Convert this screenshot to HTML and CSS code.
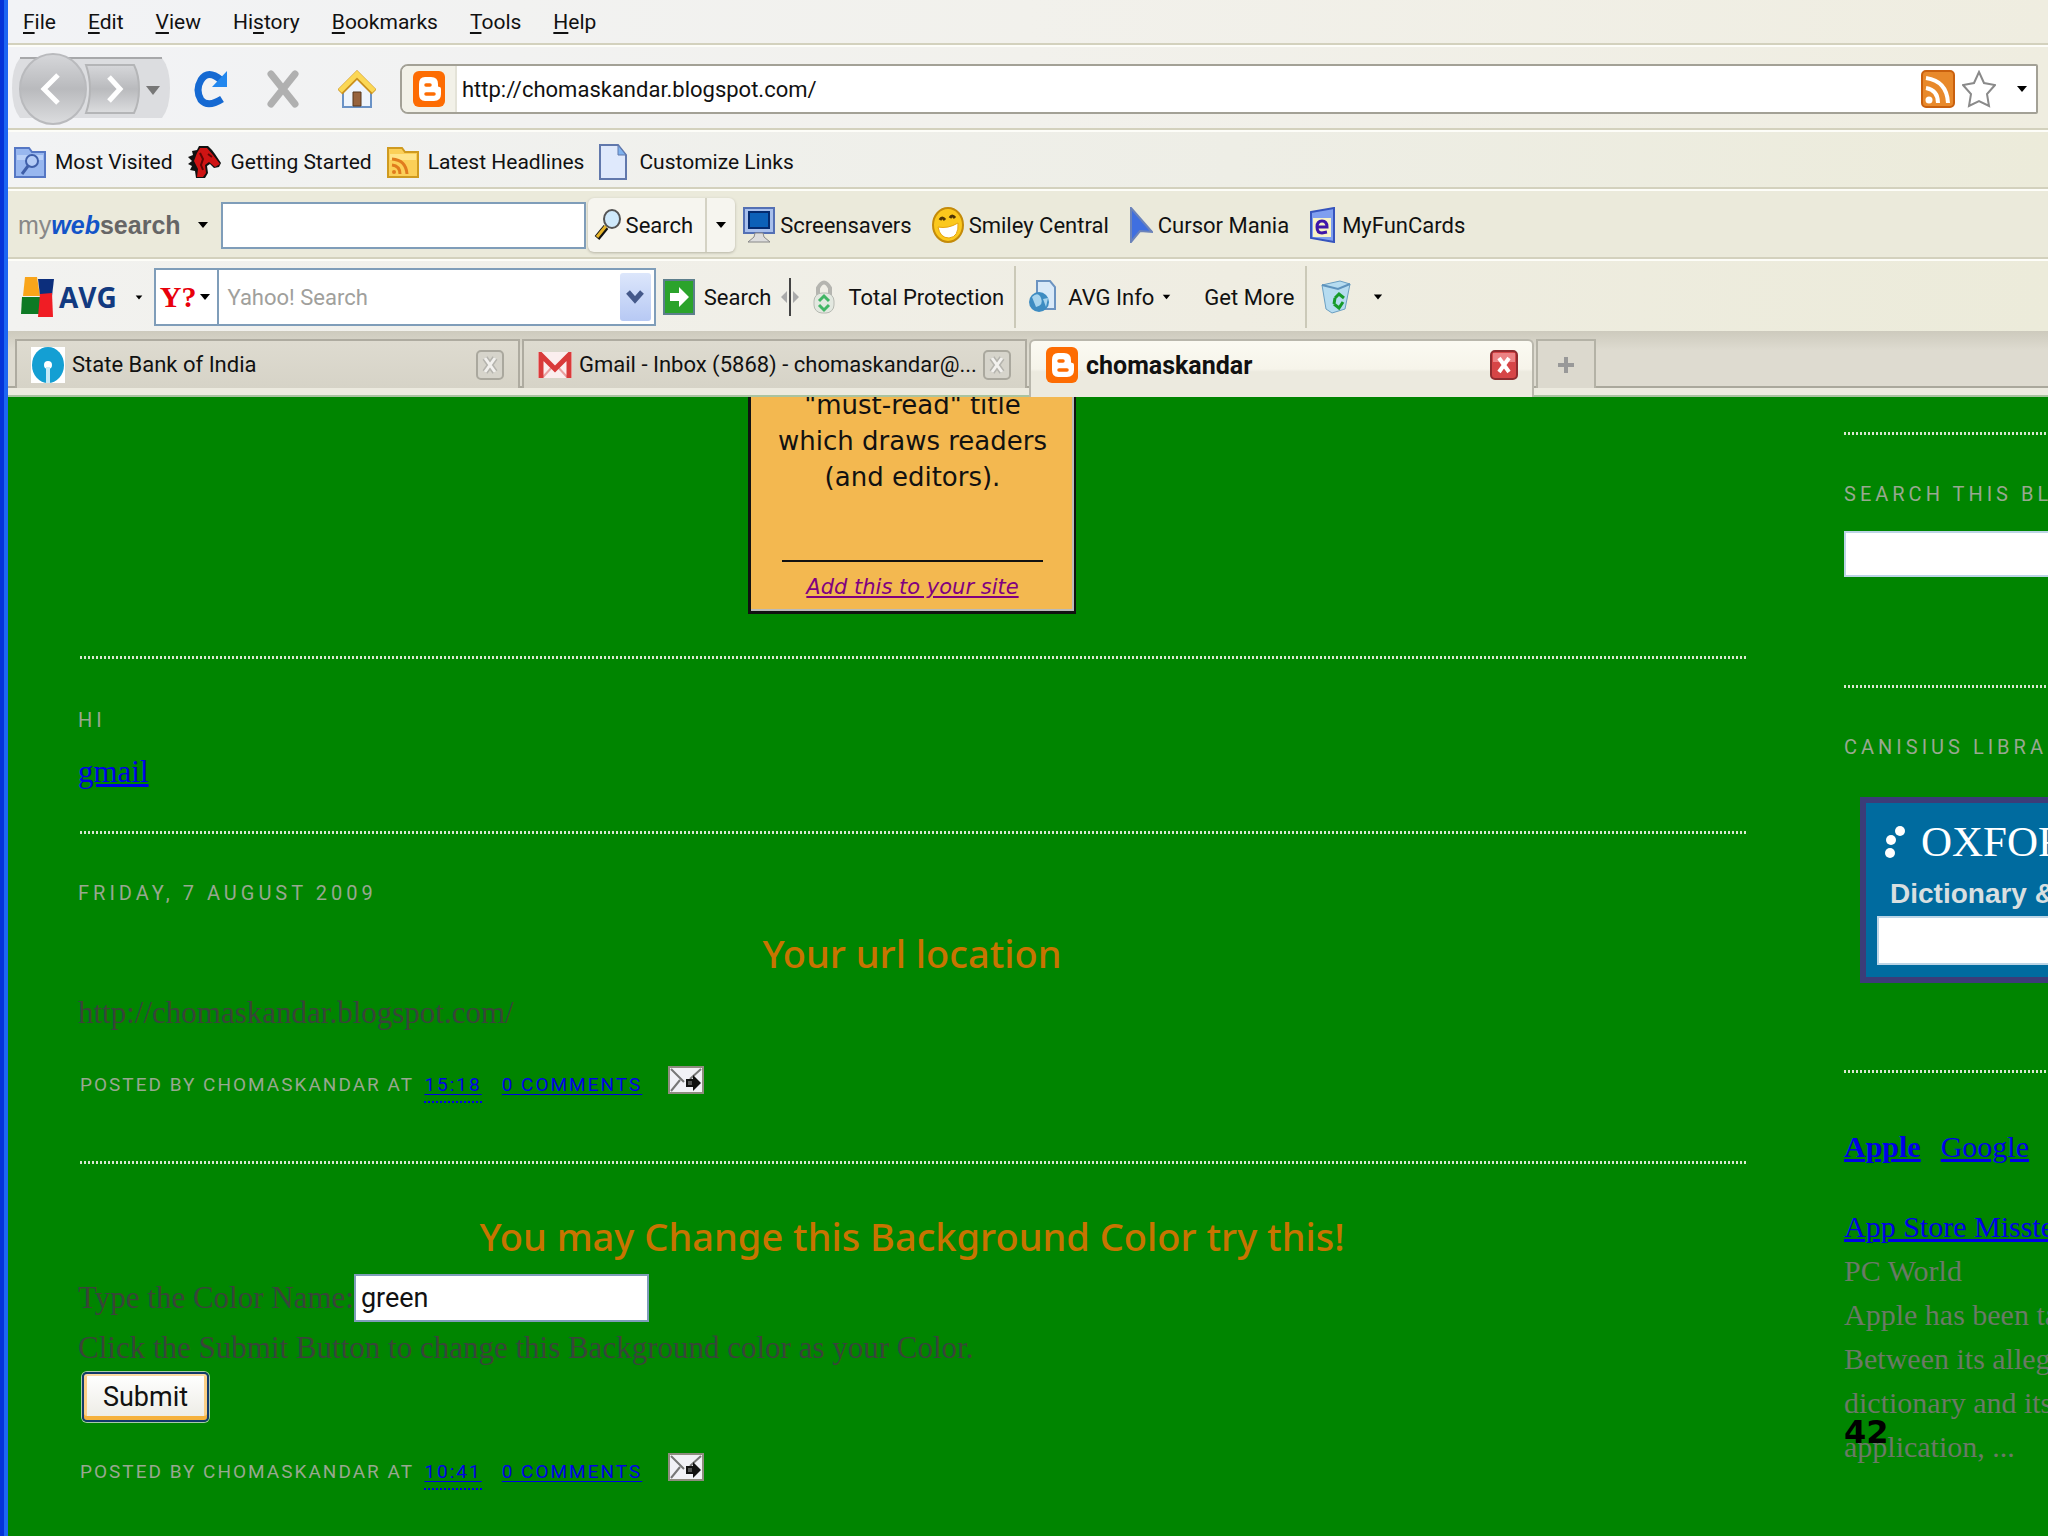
FILE: index.html
```html
<!DOCTYPE html>
<html lang="en">
<head>
	<meta charset="UTF-8">
	<title>chomaskandar</title>
	<link rel="stylesheet" href="styles.css">
</head>
<body>
	<svg class="defs" width="0" height="0" aria-hidden="true">
		<symbol id="blogger" viewBox="0 0 34 36">
			<rect x="1" width="32" height="36" rx="6" fill="#fd6c02"/>
			<path d="M13 6h6q7 0 7 7v2q0 1 1.500 1t1.500 2v5q0 7-7 7h-9q-6 0-6-7V13q0-7 6-7z" fill="#fff"/>
			<path d="M14 14h4M14 23h8" stroke="#fd6c02" stroke-width="3.500" stroke-linecap="round"/>
		</symbol>
		<symbol id="down" viewBox="0 0 12 8"><path d="M1 1h10L6 7z"/></symbol>
		<symbol id="mail" viewBox="0 0 36 28">
			<rect x="1" y="1" width="34" height="26" fill="#f1f1f6" stroke="#8f8c80" stroke-width="2"/>
			<path d="M3 3l13 13M33 3L22 13M3 25l9-11" fill="none" stroke="#777" stroke-width="2"/>
			<path d="M18 13h7V9l8 8-8 8v-4h-7z" fill="#111"/>
			<path d="M20 15h4v4h-4z" fill="#555"/>
		</symbol>
		<symbol id="close" viewBox="0 0 28 30">
			<rect x="1" y="1" width="26" height="28" rx="4" fill="#d6d4cb" stroke="#aaa89e" stroke-width="2"/>
			<path d="M9 8l10 14M19 8L9 22" stroke="#b5b4ae" stroke-width="6"/>
			<path d="M9 8l10 14M19 8L9 22" stroke="#f2f1ee" stroke-width="3"/>
		</symbol>
	</svg>

	<div class="window">
		<nav class="bar menu">
			<button><u>F</u>ile</button><button><u>E</u>dit</button><button><u>V</u>iew</button><button>Hi<u>s</u>tory</button><button><u>B</u>ookmarks</button><button><u>T</u>ools</button><button><u>H</u>elp</button>
		</nav>

		<div class="bar navigation">
			<button class="history" aria-label="Back and forward">
				<svg width="160" height="74" viewBox="0 0 160 74">
					<defs><linearGradient id="grey" x2="0" y2="1"><stop stop-color="#d6d7da"/><stop offset="0.500" stop-color="#b9babd"/><stop offset="1" stop-color="#dcdddf"/></linearGradient></defs>
					<path d="M8 6h142q8 10 8 30t-8 30H8Q0 56 0 36T8 6z" fill="#dcdde0"/>
					<path d="M8 6h142" stroke="#a7a8aa" stroke-width="2"/>
					<path d="M74 13h48q5 10 5 24t-5 24H74q8-24 0-48z" fill="url(#grey)" stroke="#b4b5b7" stroke-width="2"/>
					<ellipse cx="41" cy="37" rx="33" ry="35" fill="url(#grey)" stroke="#b9babd" stroke-width="2"/>
					<path d="M46 23L32 37l14 14M97 25l11 12-11 12" fill="none" stroke="#fff" stroke-width="5"/>
					<path d="M134 34h14l-7 9z" fill="#777"/>
				</svg>
			</button>
			<button class="tool" aria-label="Reload">
				<svg width="34" height="38" viewBox="0 0 34 38"><path d="M27 10Q14-1 7 10Q1 20 7 30Q14 38 28 29" fill="none" stroke="#1569d2" stroke-width="7"/><path d="M33 1v16H18z" fill="#2287ee"/></svg>
			</button>
			<button class="tool" aria-label="Stop">
				<svg width="34" height="38" viewBox="0 0 34 38"><path d="M5 4l24 30M29 4L5 34" stroke="#b0b0b0" stroke-width="7" stroke-linecap="round"/></svg>
			</button>
			<button class="tool" aria-label="Home">
				<svg width="38" height="38" viewBox="0 0 38 38"><path d="M5 18L19 5l14 13v19H5z" fill="#eef4fc" stroke="#6a92c6" stroke-width="2"/><path d="M15 22h8v14h-8z" fill="#97633d" stroke="#56361d"/><path d="M2 22L19 5l17 17" fill="none" stroke="#c98f1c" stroke-width="7"/><path d="M2 21L19 4l17 17" fill="none" stroke="#fbd755" stroke-width="5"/></svg>
			</button>
			<div class="address">
				<span class="site"><svg width="34" height="36"><use href="#blogger"/></svg></span>
				<input type="text" value="http://chomaskandar.blogspot.com/" aria-label="Address">
				<button aria-label="Subscribe">
					<svg width="34" height="38" viewBox="0 0 34 38"><rect x="1" y="1" width="32" height="36" rx="4" fill="#e8892b" stroke="#c9600e" stroke-width="2"/><circle cx="8" cy="30" r="3.500" fill="#fff"/><path d="M5 18q12 2 12 15M5 8q21 3 22 25" fill="none" stroke="#fff" stroke-width="4"/></svg>
				</button>
				<button aria-label="Bookmark this page">
					<svg width="34" height="38" viewBox="0 0 34 38"><path d="M17 2l5 11 11 2-8 9 2 12-10-5-10 5 2-12-8-9 11-2z" fill="#fff" stroke="#8a8a8a" stroke-width="2"/></svg>
				</button>
				<button class="more" aria-label="Show history"><svg width="12" height="8"><use href="#down"/></svg></button>
			</div>
		</div>

		<nav class="bar bookmarks">
			<a href="#"><svg width="32" height="32" viewBox="0 0 32 32"><path d="M1 2h14l3 4h13v25H1z" fill="#98b7ef" stroke="#5577c4" stroke-width="2"/><path d="M3 9h26v5H3z" fill="#b9d0f8"/><circle cx="18" cy="15" r="6" fill="#b3cbf6" stroke="#3f5fa9" stroke-width="2"/><path d="M14 20l-6 8" stroke="#3f5fa9" stroke-width="3"/></svg>Most Visited</a>
			<a href="#"><svg width="34" height="34" viewBox="0 0 34 34"><path d="M11 1h9l4 4 3 4 6 9-2 4-5 1-4-4-3 2 1 7-3 5H8L7 26l-5-1 2-4-4-2 4-3-4-4 5-2-1-4 5-1z" fill="#111"/><path d="M12 3h7l6 7 7 9-5 3-6-5-4 3 1 8-3 4H9l1-8-4-8 3-8z" fill="#cf1313"/><path d="M20 9l4 3M12 8l3 6-2 6 2 5" stroke="#5f0505" stroke-width="2" fill="none"/></svg>Getting Started</a>
			<a href="#"><svg width="32" height="32" viewBox="0 0 32 32"><path d="M1 2h14l3 4h13v25H1z" fill="#fbcf58" stroke="#cf9a1f" stroke-width="2"/><path d="M3 8h26v6H3z" fill="#ffe48a"/><circle cx="7" cy="26" r="2" fill="#e07b1d"/><path d="M5 19q8 1 8 9M5 13q14 1 15 15" fill="none" stroke="#e07b1d" stroke-width="3"/></svg>Latest Headlines</a>
			<a class="page" href="#"><svg width="28" height="36" viewBox="0 0 28 36"><path d="M1 1h18l8 10v24H1z" fill="#dfe9fc" stroke="#6178ac" stroke-width="2"/><path d="M19 1v10h8z" fill="#7fb2ee" stroke="#6178ac"/></svg>Customize Links</a>
		</nav>

		<div class="bar websearch">
			<button class="brand"><span class="my">my</span><em>web</em>search</button>
			<button class="arrow" aria-label="My Web Search menu"><svg width="12" height="8"><use href="#down"/></svg></button>
			<input type="text" aria-label="My Web Search">
			<div class="split">
				<button><svg width="28" height="32" viewBox="0 0 28 32"><path d="M12 18L3 29" stroke="#111" stroke-width="6"/><path d="M12 17L3 28" stroke="#e7b52a" stroke-width="3"/><ellipse cx="18" cy="10" rx="8" ry="9" fill="#cfe9fb" stroke="#555" stroke-width="2"/></svg>Search</button>
				<button class="more" aria-label="Search options"><svg width="12" height="8"><use href="#down"/></svg></button>
			</div>
			<a href="#"><svg width="32" height="36" viewBox="0 0 32 36"><rect x="1" y="1" width="30" height="25" fill="#a9c0ec" stroke="#5470b4" stroke-width="2"/><rect x="6" y="5" width="20" height="16" fill="#0c60b8" stroke="#042a6f" stroke-width="2"/><path d="M12 26h8l1 4 6 5H5l6-5z" fill="#ddd" stroke="#888"/></svg>Screensavers</a>
			<a href="#"><svg width="32" height="36" viewBox="0 0 32 36"><ellipse cx="16" cy="18" rx="15" ry="17" fill="#fbc81d" stroke="#c48b0a" stroke-width="2"/><path d="M6 20q10 2 20-4 1 14-9 15-9 0-11-11z" fill="#fff" stroke="#e6a50f"/><path d="M8 13q2-4 5 0M18 11q2-4 5 0" fill="none" stroke="#4d3406" stroke-width="3"/></svg>Smiley Central</a>
			<a href="#"><svg width="24" height="36" viewBox="0 0 24 36"><path d="M2 1l21 24-12-1-9 11z" fill="#3f6fe0" stroke="#6b83b9" stroke-width="2"/></svg>Cursor Mania</a>
			<a href="#"><svg width="28" height="36" viewBox="0 0 28 36"><path d="M2 5L25 1v34L2 31z" fill="#7f9ff0" stroke="#3654bd" stroke-width="2"/><path d="M4 11h18v19H4z" fill="#f8f3c5"/><path d="M8 20h10q0-6-5-6t-5 6 5 6l5-1" fill="none" stroke="#3f16a8" stroke-width="3"/></svg>MyFunCards</a>
		</div>

		<div class="bar avg">
			<button class="avg-brand"><svg width="36" height="40" viewBox="0 0 36 40"><path d="M5 0h12l3 19H3z" fill="#f9a51a"/><path d="M18 2h16l-2 17H20z" fill="#0c2e7c"/><path d="M2 20h18v17H1z" fill="#0d7a24"/><path d="M20 17l12-1 1 24H18z" fill="#f01d24"/></svg>AVG</button>
			<button class="arrow" aria-label="AVG menu"><svg width="8" height="7" viewBox="0 0 12 8"><use href="#down"/></svg></button>
			<div class="yahoo">
				<button class="engine" aria-label="Search engine"><b>Y?</b><svg width="12" height="8"><use href="#down"/></svg></button>
				<input type="text" placeholder="Yahoo! Search" aria-label="Yahoo! Search">
				<button class="drop" aria-label="Recent searches"><svg width="18" height="14" viewBox="0 0 18 14"><path d="M2 2l7 8 7-8" fill="none" stroke="#45598a" stroke-width="5"/></svg></button>
			</div>
			<button class="go"><svg width="32" height="36" viewBox="0 0 32 36"><rect x="1" y="1" width="30" height="34" fill="#2ba32b" stroke="#5d7f8c" stroke-width="2"/><path d="M7 14h9V8l10 10-10 10v-6H7z" fill="#fff"/></svg>Search</button>
			<svg class="splitter" width="18" height="38" viewBox="0 0 18 38"><path d="M9 0v38" stroke="#444" stroke-width="2"/><path d="M6 13v12l-6-6zM12 13v12l6-6z" fill="#aaa"/></svg>
			<a href="#"><svg width="24" height="34" viewBox="0 0 24 34"><path d="M6 15V8q6-11 12 0v7" fill="none" stroke="#b5b5b0" stroke-width="4"/><rect x="2" y="13" width="20" height="20" rx="8" fill="#e3e8e0" stroke="#b6b9b2"/><path d="M7 21l5-5 5 5M17 25l-5 5-5-5" fill="none" stroke="#42b565" stroke-width="3"/></svg>Total Protection</a>
			<a class="info" href="#"><svg width="28" height="34" viewBox="0 0 28 34"><path d="M9 1h13l5 6v22H9z" fill="#d9e9f8" stroke="#6c93c0" stroke-width="2"/><circle cx="11" cy="22" r="10" fill="#3e8cc2"/><path d="M4 17q6-6 9 1t-5 9zM15 19l5-1-2 9z" fill="#a8d4ee"/></svg>AVG Info<svg class="small" width="9" height="8" viewBox="0 0 12 8"><use href="#down"/></svg></a>
			<a class="get" href="#">Get More</a>
			<button class="recycle" aria-label="Recycle"><svg width="30" height="34" viewBox="0 0 30 34"><path d="M1 5l18-4 10 3-5 25-13 4-6-4z" fill="#b6dcf0" stroke="#6a9fc2"/><path d="M1 5l16 4 12-5" fill="none" stroke="#5e93bd" stroke-width="2"/><path d="M14 18l4-4 5 4M22 22l-4 6-5-4M14 18l-1 6" fill="none" stroke="#179b2a" stroke-width="3"/></svg><svg class="small" width="10" height="8" viewBox="0 0 12 8"><use href="#down"/></svg></button>
		</div>

		<div class="tabs">
			<div class="tab">
				<svg width="34" height="36" viewBox="0 0 34 36"><path d="M0 0h34v36H0z" fill="#fff"/><ellipse cx="17" cy="18" rx="16" ry="18" fill="#149fd3"/><circle cx="17" cy="18" r="4" fill="#fff"/><path d="M17 20v16" stroke="#c7eaf7" stroke-width="4"/></svg>
				<span>State Bank of India</span>
				<button aria-label="Close tab"><svg width="28" height="30"><use href="#close"/></svg></button>
			</div>
			<div class="tab">
				<svg width="34" height="26" viewBox="0 0 34 26"><path d="M0 0h34v26H0z" fill="#fbeeee"/><path d="M5 25l10-11M29 25L19 14" stroke="#eaa0a0" stroke-width="2"/><path d="M3 26V3l14 14L31 3v23" fill="none" stroke="#d93a3a" stroke-width="5"/></svg>
				<span>Gmail - Inbox (5868) - chomaskandar@...</span>
				<button aria-label="Close tab"><svg width="28" height="30"><use href="#close"/></svg></button>
			</div>
			<div class="tab active">
				<svg width="34" height="36"><use href="#blogger"/></svg>
				<span>chomaskandar</span>
				<button aria-label="Close tab"><svg width="28" height="30" viewBox="0 0 28 30"><rect x="1" y="1" width="26" height="28" rx="4" fill="#d64547" stroke="#8e2c30" stroke-width="2"/><path d="M3 3h22v9H3z" fill="#ec8284"/><path d="M9 8l10 14M19 8L9 22" stroke="#fff" stroke-width="4"/></svg></button>
			</div>
			<button class="new" aria-label="New tab"><svg width="18" height="18" viewBox="0 0 18 18"><path d="M9 1v16M1 9h16" stroke="#999" stroke-width="4"/></svg></button>
		</div>

		<div class="content">
			<main class="main">
				<section class="block top">
					<div class="widget">
						<p>"must-read" title<br>which draws readers<br>(and editors).</p>
						<a href="#">Add this to your site</a>
					</div>
				</section>
				<section class="block hi">
					<h2>Hi</h2>
					<a href="#">gmail</a>
				</section>
				<section class="block post">
					<h2>Friday, 7 August 2009</h2>
					<h3>Your url location</h3>
					<p>http://chomaskandar.blogspot.com/</p>
					<footer>Posted by chomaskandar at <a class="time" href="#">15:18</a> <a href="#">0 comments</a> <a class="mail" href="#" aria-label="Email post"><svg width="36" height="28"><use href="#mail"/></svg></a></footer>
				</section>
				<section class="block post">
					<h3>You may Change this Background Color try this!</h3>
					<form>
						<div class="field"><label for="color">Type the Color Name:</label><input id="color" type="text" value="green"></div>
						<p>Click the Submit Button to change this Background color as your Color.</p>
						<button type="button">Submit</button>
					</form>
					<footer>Posted by chomaskandar at <a class="time" href="#">10:41</a> <a href="#">0 comments</a> <a class="mail" href="#" aria-label="Email post"><svg width="36" height="28"><use href="#mail"/></svg></a></footer>
				</section>
			</main>
			<aside class="side">
				<section class="block search">
					<h2><label for="search">Search this blog</label></h2>
					<input id="search" type="text">
				</section>
				<section class="block library">
					<h2>Canisius Library</h2>
					<div class="oxford">
						<strong><svg width="24" height="34" viewBox="0 0 24 34"><circle cx="15" cy="6" r="5"/><circle cx="6" cy="15" r="5"/><circle cx="5" cy="28" r="5"/></svg>OXFORD</strong>
						<label for="dictionary">Dictionary &amp; Thesaurus</label>
						<input id="dictionary" type="text">
					</div>
				</section>
				<section class="block news">
					<nav><a href="#"><b>Apple</b></a><a href="#">Google</a></nav>
					<a href="#">App Store Missteps</a>
					<p>PC World<br>Apple has been taking<br>Between its alleged<br>dictionary and its<br>application, ...</p>
					<b class="count">42</b>
				</section>
			</aside>
		</div>
	</div>
</body>
</html>
```

FILE: styles.css
```css
*{box-sizing:border-box;}
body{margin:0;background:#008500;font-family:Roboto,"Noto Sans",sans-serif;font-size:22px;color:#111;}
button,input{margin:0;padding:0;border:0;background:none;font:inherit;color:inherit;}
svg{display:block;flex:none;}
.defs{position:absolute;}
.window{display:flex;flex-direction:column;height:100vh;overflow:hidden;border-left:4px solid #0433d8;box-shadow:inset 4px 0 #1c66f2;padding-left:4px;}

/* toolbars */
.bar{display:flex;align-items:center;flex:none;border-bottom:2px solid #fdfdf8;box-shadow:inset 0 -2px #d3d1bd;background:linear-gradient(90deg,#f2f3f6,#f2f1ec 50%,#efede0);white-space:nowrap;}
.bar a{display:flex;align-items:center;color:#111;text-decoration:none;}
.menu{height:47px;padding:0 15px 2px;gap:32px;font-size:21px;}
.menu u{text-underline-offset:3px;}
.navigation{height:85px;padding:0 10px 0 4px;}
.history{margin-right:22px;}
.tool{margin-right:38px;}
.address{display:flex;align-items:center;flex:1;height:50px;margin-left:-14px;border:2px solid #a3a196;border-radius:8px 2px 2px 8px;background:#fff;}
.address input{flex:1;padding:2px 0 0 5px;}
.address button{margin-right:7px;}
.address .more{margin:0 8px 0 13px;}
.site{display:flex;align-items:center;height:46px;padding:0 9px 0 10px;border-right:2px solid #e4e3d8;border-radius:6px 0 0 6px;background:#f2f1e8;}
.bookmarks{height:59px;padding:2px 0 0 6px;gap:15px;font-size:21px;background:linear-gradient(90deg,#f2f3f4,#eeeee6 60%,#ecebda);}
.bookmarks a{gap:9px;}
.bookmarks .page{gap:12px;}

.websearch{height:70px;padding-left:10px;background:#ebeadb;}
.websearch input{width:365px;height:47px;border:2px solid #7f9db9;background:#fff;}
.websearch a{gap:5px;margin-right:20px;}
.brand{font-family:"Liberation Sans",sans-serif;font-size:25px;font-weight:bold;color:#666;}
.brand .my{font-weight:normal;color:#888;}
.brand em{color:#1254c8;}
.arrow{margin:0 12px 0 16px;}
.split{display:flex;height:54px;margin:0 8px 0 2px;border-radius:6px;background:#f6f5ef;box-shadow:0 1px 3px #b5b3a5;}
.split button{display:flex;align-items:center;gap:4px;padding:0 12px 0 6px;}
.split .more{padding:0 8px;border-left:2px solid #d4d2c4;}

.avg{height:70px;padding:2px 0 0 12px;border:0;box-shadow:none;background:linear-gradient(90deg,#f2f2f0,#efede2 60%,#ecebda);}
.avg-brand{display:flex;align-items:center;gap:3px;font-family:"Open Sans",sans-serif;font-size:28px;font-weight:bold;color:#123a80;}
.avg .arrow{margin:0 11px 0 18px;}
.avg a{gap:12px;}
.avg .small{margin-left:-4px;}
.yahoo{display:flex;width:502px;height:58px;margin-right:7px;border:2px solid #7f9db9;background:#fff;}
.yahoo input{flex:1;width:0;padding-left:8px;}
.yahoo input::placeholder{color:#a0a09c;opacity:1;}
.engine{display:flex;align-items:center;gap:3px;padding:0 6px 0 4px;border-right:2px solid #7f9db9;}
.engine b{font-family:"Liberation Serif",serif;font-size:30px;color:#e8000b;}
.drop{display:flex;align-items:center;justify-content:center;width:31px;margin:3px;border-radius:3px;background:linear-gradient(#dce6fb,#b7c9f4);}
.go{display:flex;align-items:center;gap:9px;}
.splitter{margin:0 13px 0 10px;}
.avg .info{height:62px;margin-left:10px;padding:0 33px 0 12px;border-left:2px solid #cbc9b8;}
.recycle{display:flex;align-items:center;gap:26px;height:62px;margin-left:11px;padding-left:14px;border-left:2px solid #cbc9b8;}

/* tab strip */
.tabs{display:flex;align-items:flex-end;flex:none;height:66px;padding:8px 0 0 7px;border-bottom:2px solid #a9c3a0;background:linear-gradient(#cdcabd,#dedbd0 30%,#dedbd0 86%,#aaa89c 86%,#aaa89c 89%,#eceadf 89%);}
.tab{display:flex;align-items:center;gap:7px;width:505px;height:49px;margin:0 2px 7px 0;padding:0 14px;border:2px solid #aeaba0;border-bottom:0;background:linear-gradient(#dedbd0,#d6d3c7);white-space:nowrap;}
.tab span{flex:1;min-width:0;overflow:hidden;}
.tab.active{height:58px;margin-bottom:-2px;padding-bottom:8px;border-color:#b9b7ac;border-radius:6px 6px 0 0;background:linear-gradient(#fbfaf2,#f6f4ea 50%,#eceadf 55%);font-size:25px;font-weight:bold;}
.new{display:flex;align-items:center;justify-content:center;width:60px;height:49px;margin-bottom:7px;border:2px solid #b4b2a6;border-bottom:0;background:#dcd9ce;}

/* blog */
.content{display:flex;flex:1;min-height:0;overflow:hidden;gap:98px;padding-left:70px;background:#008500;font-family:"Liberation Serif",serif;font-size:30px;line-height:44px;color:#3a443a;}
.content a{color:#0000e8;}
.content p,.content h2,.content h3{margin:0;}
.content h2{margin-bottom:18px;font-family:Roboto,sans-serif;font-size:20px;line-height:24px;font-weight:normal;letter-spacing:4px;text-transform:uppercase;color:#98a890;}
.main{flex:1;min-width:0;font-size:31px;}
.block{position:relative;}
.main .block::after,.side .block::before{content:"";display:block;height:3px;background:repeating-linear-gradient(90deg,#d8e8d0 0 2px,#008500 2px 4px);}
.main .block::after{margin-left:2px;}
.widget{width:328px;margin:0 auto 42px;padding:0 28px 7px;border:solid #111;border-width:0 2px 3px 3px;box-shadow:inset -2px -2px #bbb;background:#f3b850;text-align:center;font-family:"DejaVu Sans",sans-serif;color:#111;}
.widget p{margin:0 -20px;padding-bottom:65px;font-size:26px;line-height:36px;}
.widget a{display:block;margin:0 3px;padding-top:8px;border-top:2px solid #111;font-size:21px;line-height:34px;font-style:italic;white-space:nowrap;color:#800080;}
.top{margin-top:-10px;}
.hi{padding-top:49px;}
.hi a{display:block;margin-bottom:37px;}
.post{padding-top:47px;}
.post + .post{padding-top:50px;}
.post h2{margin-bottom:26px;}
.content h3{margin-bottom:16px;font-family:"Noto Sans",sans-serif;font-size:38px;line-height:44px;font-weight:500;color:#c87400;text-align:center;}
.content footer{display:flex;height:28px;margin:36px 0 62px 2px;font-family:Roboto,sans-serif;font-size:19px;line-height:28px;letter-spacing:2px;text-transform:uppercase;white-space:pre;color:#98a890;}
footer a{height:32px;margin-left:20px;text-underline-offset:3px;}
footer .time{margin-left:4px;border-bottom:2px dotted #0000e8;}
footer .mail{margin:-5px 0 0 26px;}
.field{display:flex;align-items:center;margin-bottom:4px;}
.field input{width:295px;height:48px;padding-left:5px;border:2px solid #7f9db9;background:#fff;font:27px Roboto,sans-serif;color:#111;}
form button{display:block;width:127px;height:50px;margin:2px 0 0 4px;border:2px solid #123a6b;border-radius:5px;background:linear-gradient(#fff,#ecebe4);box-shadow:inset 0 2px #fcd9a0,inset 0 -4px #f5b13c,inset 3px 0 #fbcf87,inset -3px 0 #fbcf87,0 0 0 1px #a9cba8;font:27px/40px Roboto,sans-serif;color:#111;}

.side{width:204px;flex:none;padding-top:35px;white-space:nowrap;color:#6a7a66;}
.side h2{margin-bottom:25px;padding-top:47px;}
.side input{display:block;width:400px;height:46px;border:2px solid #bcd5e6;background:#fff;}
.search{padding-bottom:108px;}
.library{padding-bottom:87px;}
.oxford{width:400px;margin:38px 0 0 16px;padding:9px 11px 12px;border:6px solid #3c3c78;background:#006b9f;color:#fff;}
.oxford strong{display:flex;align-items:center;gap:12px;padding-left:8px;font-size:43px;line-height:60px;font-weight:normal;}
.oxford svg{fill:#fff;}
.oxford label{display:block;padding-left:13px;font-family:"Liberation Sans",sans-serif;font-weight:bold;font-size:28px;line-height:44px;color:#d8dfe0;}
.oxford input{width:360px;height:49px;}
.news nav{display:flex;gap:20px;padding:52px 0 36px;}
.news > a{display:block;}
.count{position:absolute;left:0;bottom:15px;color:#000;font-family:"DejaVu Sans",sans-serif;font-size:32px;}
```
